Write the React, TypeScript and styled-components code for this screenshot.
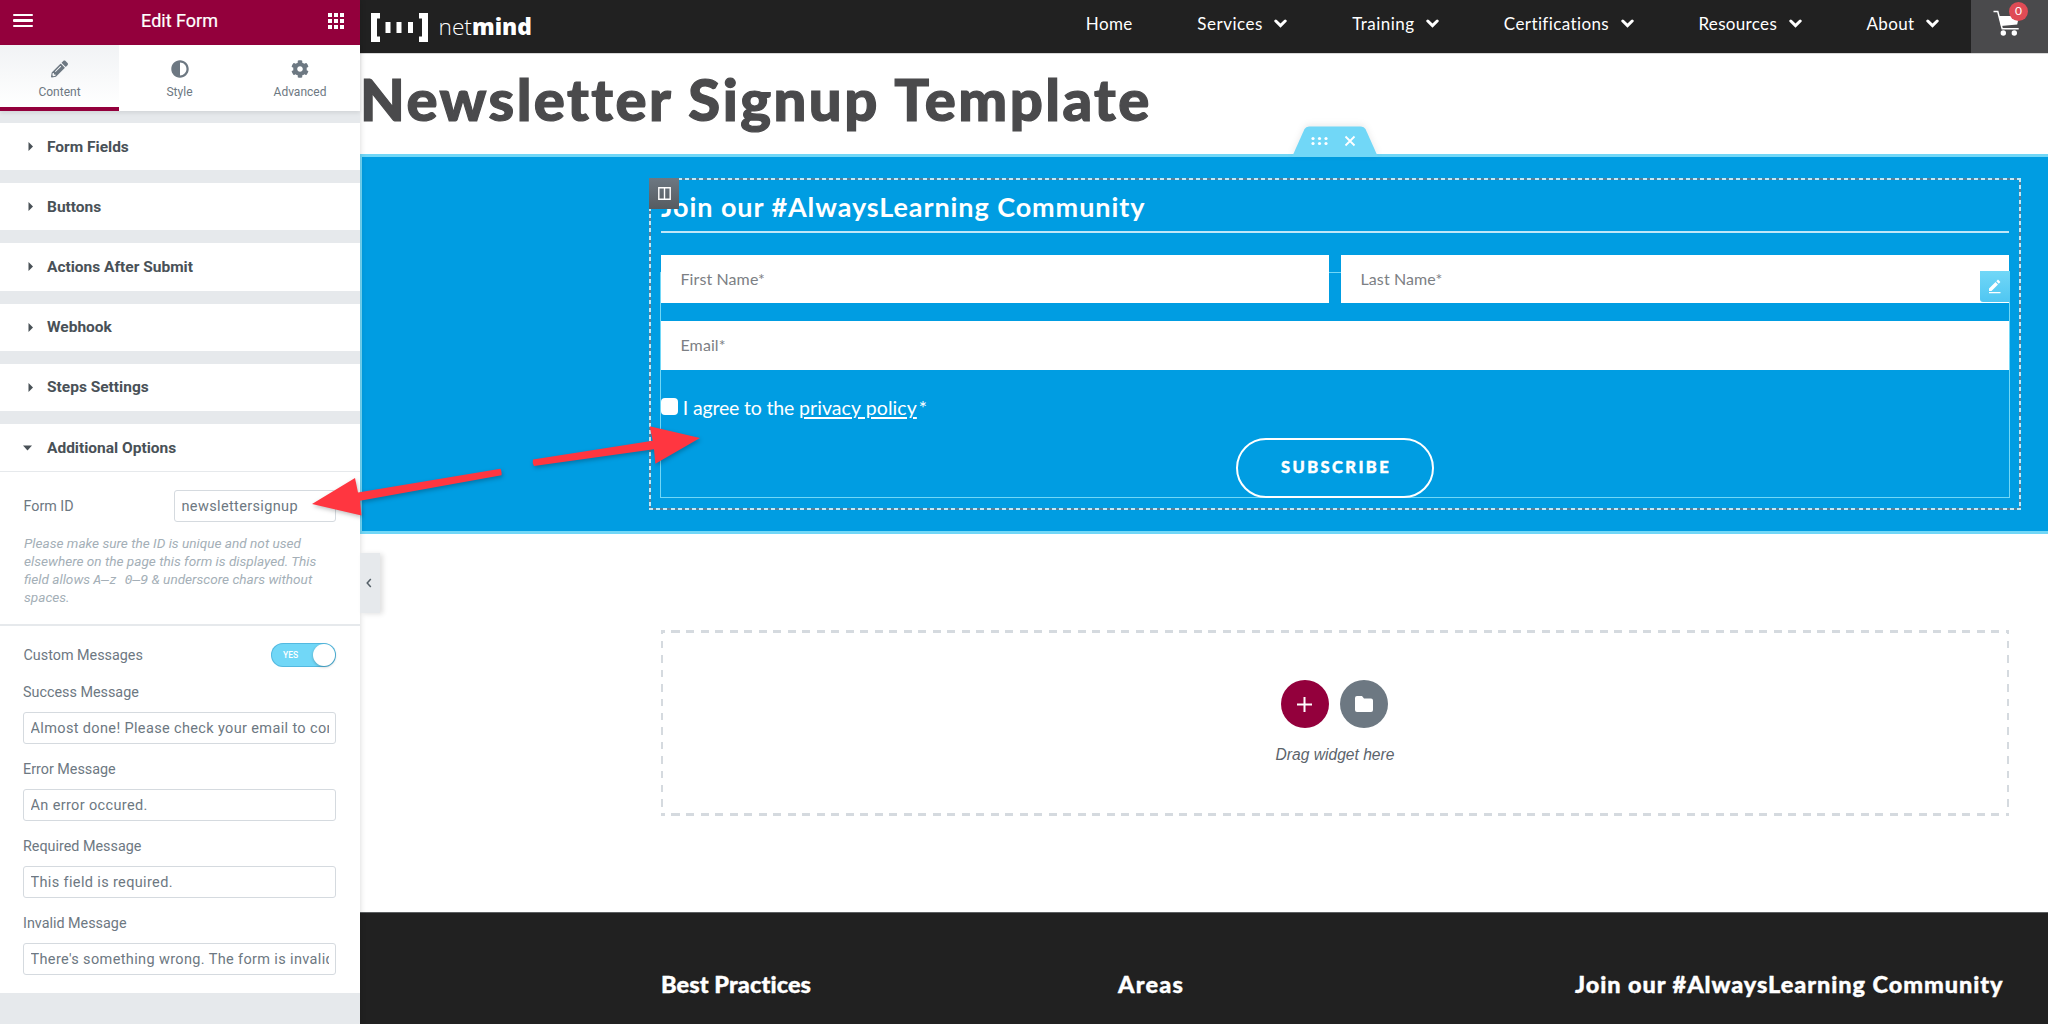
import React from "react";
import styled, { createGlobalStyle, css } from "styled-components";
import { FaPencilAlt, FaAdjust, FaCog } from "react-icons/fa";

const roboto = `Roboto, "Liberation Sans", sans-serif`;
const geo = `Lato, "Open Sans", sans-serif`;

const Global = createGlobalStyle`
  * { box-sizing: border-box; }
  body { margin: 0; background: #fff; overflow: hidden; }
  h1, h2, h3, p { margin: 0; }
`;

const Screen = styled.div`
  position: relative;
  display: flex;
  width: 2048px;
  height: 1024px;
  overflow: hidden;
`;

/* ---------- editor panel ---------- */

const Panel = styled.aside`
  position: relative;
  z-index: 2;
  flex: none;
  width: 360px;
  height: 1024px;
  display: flex;
  flex-direction: column;
  background: #e6e9ec;
  font-family: ${roboto};
  box-shadow: 0 0 6px rgba(0, 0, 0, 0.16);
`;

const PanelHeader = styled.header`
  display: flex;
  align-items: center;
  justify-content: space-between;
  height: 45px;
  padding: 0 16px 4px 13px;
  background: #93003c;
  color: #fff;
`;

const PanelTitle = styled.h2`
  padding-right: 2px;
  font-size: 18px;
  line-height: 40px;
  font-weight: 400;
  -webkit-text-stroke: 0.2px #fff;
`;

const Burger = styled.div`
  display: grid;
  gap: 3px;
  width: 20px;
  i { height: 2.6px; background: #fff; border-radius: 1px; }
`;

const Apps = styled.div`
  display: grid;
  grid-template-columns: repeat(3, 4px);
  gap: 2px;
  i { height: 4px; background: #fff; }
`;

const Tabs = styled.nav`
  display: grid;
  grid-template-columns: 119px 121px 1fr;
  height: 66px;
  background: #fff;
  box-shadow: 0 2px 4px rgba(0, 0, 0, 0.09);
`;

const Tab = styled.div<{ $active?: boolean }>`
  display: flex;
  flex-direction: column;
  align-items: center;
  gap: 6px;
  padding-top: 15px;
  color: #6d7882;
  font-size: 12px;
  line-height: 16px;
  svg { display: block; height: 18px; }
  ${(p) => p.$active && css`
    background: linear-gradient(#f1f3f5, #fff);
    border-bottom: 4px solid #93003c;
  `}
`;

const Sections = styled.div`
  display: flex;
  flex-direction: column;
  gap: 13px;
  padding-top: 12px;
`;

const SectionHead = styled.div<{ $open?: boolean }>`
  display: flex;
  align-items: center;
  height: 47.2px;
  padding-left: ${(p) => (p.$open ? 23 : 28)}px;
  gap: ${(p) => (p.$open ? 15 : 14)}px;
  background: #fff;
  color: #495157;
  font-size: 15.5px;
  font-weight: 700;
`;

const SectionBody = styled.div`
  display: flex;
  flex-direction: column;
  height: 522px;
  border-top: 1px solid #e6e9ec;
  background: #fff;
  color: #6d7882;
`;

const IdRow = styled.div`
  display: flex;
  align-items: center;
  justify-content: space-between;
  padding: 18px 24px 0 23.5px;
  font-size: 14.3px;
`;

const Field = styled.div<{ $width?: number }>`
  width: ${(p) => (p.$width ? p.$width + "px" : "100%")};
  height: 32.3px;
  padding: 0 6.5px;
  border: 1px solid #d5dadf;
  border-radius: 3px;
  background: #fff;
  color: #6d7882;
  font-size: 14.5px;
  letter-spacing: 0.36px;
  line-height: 31px;
  white-space: nowrap;
  overflow: hidden;
  div { overflow: hidden; }
`;

const Hint = styled.p`
  height: 104px;
  padding: 11.2px 0 0 24px;
  border-bottom: 2px solid #e6e9ec;
  color: #a4afb7;
  font-size: 13.6px;
  line-height: 18.1px;
  font-style: italic;
  white-space: nowrap;
  code { font: italic 13px/1 "DejaVu Sans Mono", "Liberation Mono", monospace; white-space: pre; }
`;

const SwitchRow = styled.div`
  display: flex;
  align-items: center;
  justify-content: space-between;
  padding: 17px 24px 0 23.5px;
  font-size: 14.35px;
`;

const Switch = styled.div`
  display: flex;
  align-items: center;
  justify-content: space-between;
  width: 65px;
  height: 24px;
  padding: 0 1px 0 12px;
  border-radius: 12px;
  background: #71d7f7;
  box-shadow: inset 0 0 0 1px rgba(40, 140, 190, 0.4);
  color: #fff;
  font-size: 8.5px;
  font-weight: 500;
  i { width: 22px; height: 22px; border-radius: 50%; background: #fff; box-shadow: 0 1px 3px rgba(0, 0, 0, 0.25); }
`;

const Message = styled.div`
  display: flex;
  flex-direction: column;
  gap: 11.3px;
  height: 77px;
  padding: 0 24px 0 23px;
  font-size: 14.35px;
  line-height: 16px;
`;

const Messages = styled.div`
  padding-top: 17.3px;
`;

const Collapse = styled.div`
  position: absolute;
  left: 360px;
  top: 553px;
  display: flex;
  align-items: center;
  width: 20px;
  height: 60px;
  padding-left: 6px;
  background: #e6e9ec;
  box-shadow: 3px 1px 5px rgba(0, 0, 0, 0.12);
`;

/* ---------- page preview ---------- */

const Page = styled.main`
  display: flex;
  flex-direction: column;
  width: 1688px;
  height: 1024px;
  background: #fff;
  font-family: ${geo};
`;

const TopBar = styled.header`
  display: flex;
  height: 53px;
  padding-left: 11px;
  background: #212121;
  color: #fff;
`;

const Logo = styled.div`
  display: flex;
  flex: 1;
  padding-top: 13px;
  svg { display: block; margin-right: 10.5px; }
`;

const LogoText = styled.div`
  font: 300 22.7px/27px "Open Sans", sans-serif;
  b { font-weight: 800; }
`;

const Menu = styled.nav`
  display: flex;
  padding-right: 32px;
  gap: 64.8px;
`;

const MenuItem = styled.div<{ $ls: number }>`
  display: flex;
  align-items: center;
  gap: 11.5px;
  height: 46px;
  font-size: 17px;
  span { letter-spacing: ${(p) => p.$ls}px; }
`;

const Cart = styled.div`
  position: relative;
  width: 77px;
  background: #4a4a4c;
  svg { display: block; margin: 9px 0 0 22px; }
`;

const Badge = styled.span`
  position: absolute;
  left: 38px;
  top: 1.5px;
  width: 19px;
  height: 19px;
  border-radius: 50%;
  background: #df4b55;
  font-size: 12px;
  line-height: 18px;
  text-align: center;
`;

const PageTitle = styled.h1`
  height: 101px;
  border-top: 1px solid #d8d8d8;
  color: #4a4a4c;
  font-size: 58px;
  letter-spacing: 2.45px;
  line-height: 90px;
  font-weight: 900;
  -webkit-text-stroke: 1.2px #4a4a4c;
  white-space: nowrap;
`;

const Hero = styled.section`
  position: relative;
  height: 380px;
  padding: 21px 0 0 287px;
  border: solid #71d7f7;
  border-width: 3px 0 3px 2px;
  background: #009de2;
  color: #fff;
`;

const HandleTab = styled.div`
  position: absolute;
  left: 930px;
  top: -31px;
  svg { display: block; filter: drop-shadow(0 -2px 3px rgba(0, 0, 0, 0.08)); }
`;

const dashH = "repeating-linear-gradient(90deg, #c3e9f7 0 4px, #5b8099 4px 7.2px)";
const dashV = "repeating-linear-gradient(180deg, #c3e9f7 0 4px, #5b8099 4px 7.2px)";

const Column = styled.div`
  position: relative;
  width: 1372px;
  height: 332px;
  padding: 0 12px;
  background: ${dashH} 0 0 / 100% 2px no-repeat, ${dashH} 0 100% / 100% 2px no-repeat,
    ${dashV} 0 0 / 2px 100% no-repeat, ${dashV} 100% 0 / 2px 100% no-repeat;
`;

const ColumnHandle = styled.div`
  position: absolute;
  left: 0;
  top: 0;
  display: flex;
  align-items: center;
  justify-content: center;
  width: 30px;
  height: 31px;
  background: linear-gradient(#6d7882, #565b60);
`;

const FormTitle = styled.h2`
  height: 55px;
  padding-top: 5px;
  border-bottom: 2px solid #c0e7f8;
  font-size: 27px;
  letter-spacing: 0.92px;
  line-height: 48px;
  font-weight: 700;
`;

const Form = styled.div`
  position: relative;
  margin-top: 22px;
  height: 243px;
`;

const FormOutline = styled.div`
  position: absolute;
  inset: 16.5px -1px 0 -1px;
  border: 1px solid #71d7f7;
`;

const FieldGrid = styled.div`
  position: relative;
  display: grid;
  grid-template-columns: 1fr 1fr;
  gap: 18px 12px;
`;

const PageInput = styled.div<{ $full?: boolean }>`
  grid-column: ${(p) => (p.$full ? "1 / -1" : "auto")};
  height: 48.4px;
  padding-left: 19.5px;
  background: #fff;
  color: #7c8084;
  font-size: 16px;
  letter-spacing: 0.1px;
  line-height: 48px;
`;

const EditHandle = styled.div`
  position: absolute;
  right: -1px;
  top: 16px;
  display: flex;
  align-items: center;
  justify-content: center;
  width: 30px;
  height: 31px;
  border-radius: 0 0 0 3px;
  background: linear-gradient(#71d7f7, #4fc6f2);
`;

const Consent = styled.label`
  position: relative;
  display: flex;
  align-items: center;
  gap: 4.8px;
  margin-top: 22.5px;
  height: 30px;
  font-size: 19.5px;
  letter-spacing: -0.17px;
  i { width: 17px; height: 17px; margin-top: -2px; border-radius: 4px; background: #fff; }
  u { letter-spacing: 0.08px; margin-right: 2px; text-decoration-thickness: 1.5px; text-underline-offset: 2px; }
`;

const Submit = styled.div`
  position: relative;
  width: 198px;
  height: 59.5px;
  margin: 16px auto 0;
  padding-left: 2px;
  border: 2.6px solid #fff;
  border-radius: 30px;
  font-size: 16.5px;
  letter-spacing: 2.4px;
  line-height: 54px;
  font-weight: 900;
  -webkit-text-stroke: 0.4px #fff;
  text-align: center;
`;

const zoneH = "repeating-linear-gradient(90deg, #d5dadf 0 4px, transparent 4px 10.5px, #d5dadf 10.5px 14.5px)";
const zoneV = "repeating-linear-gradient(180deg, #d5dadf 0 4px, transparent 4px 11px, #d5dadf 11px 14.4px)";

const DropZone = styled.div`
  display: flex;
  flex-direction: column;
  align-items: center;
  gap: 16.8px;
  width: 1348px;
  height: 186px;
  margin: 96px 0 96px 301px;
  padding-top: 50px;
  background: ${zoneH} 0 0 / 100% 3px no-repeat, ${zoneH} 0 100% / 100% 3px no-repeat,
    ${zoneV} 0 0 / 2px 100% no-repeat, ${zoneV} 100% 0 / 2px 100% no-repeat;
  color: #5c646b;
  font: italic 15.6px/20px "Liberation Sans", Arial, sans-serif;
`;

const Rounds = styled.div`
  display: flex;
  gap: 11px;
  padding-right: 1.5px;
`;

const Round = styled.div<{ $bg: string }>`
  display: flex;
  align-items: center;
  justify-content: center;
  width: 48px;
  height: 48px;
  border-radius: 50%;
  background: ${(p) => p.$bg};
`;

const Footer = styled.footer`
  display: grid;
  grid-template-columns: 457px 457px auto;
  flex: 1;
  padding: 56px 0 0 301px;
  background: #212121;
  border-top: 1px solid #5c5f61;
  color: #fff;
`;

const FooterTitle = styled.h3<{ $ls: number }>`
  font-size: 23.5px;
  line-height: 30px;
  font-weight: 900;
  letter-spacing: ${(p) => p.$ls}px;
  -webkit-text-stroke: 0.4px #fff;
  white-space: nowrap;
`;

const Arrows = styled.svg`
  position: absolute;
  left: 300px;
  top: 410px;
  z-index: 3;
  filter: drop-shadow(1px 2px 2px rgba(0, 0, 0, 0.25));
`;

const Chevron = () => (
  <svg width="13" height="9" viewBox="0 0 13 9">
    <path d="M1.8 2l4.7 4.6L11.2 2" fill="none" stroke="#fff" strokeWidth="3" strokeLinecap="round" />
  </svg>
);

const closed = ["Form Fields", "Buttons", "Actions After Submit", "Webhook", "Steps Settings"];
const menu = [
  { label: "Home", ls: 0.35 },
  { label: "Services", ls: 0.5, sub: true },
  { label: "Training", ls: 0.47, sub: true },
  { label: "Certifications", ls: 0.4, sub: true },
  { label: "Resources", ls: 0.33, sub: true },
  { label: "About", ls: 0.38, sub: true },
];
const messages = [
  ["Success Message", "Almost done! Please check your email to confirm"],
  ["Error Message", "An error occured."],
  ["Required Message", "This field is required."],
  ["Invalid Message", "There's something wrong. The form is invalid."],
];

export default function App() {
  return (
    <Screen>
      <Global />
      <Panel>
        <PanelHeader>
          <Burger><i /><i /><i /></Burger>
          <PanelTitle>Edit Form</PanelTitle>
          <Apps>{Array.from({ length: 9 }, (_, i) => <i key={i} />)}</Apps>
        </PanelHeader>
        <Tabs>
          <Tab $active><FaPencilAlt size={17} />Content</Tab>
          <Tab><FaAdjust size={18} />Style</Tab>
          <Tab><FaCog size={18} />Advanced</Tab>
        </Tabs>
        <Sections>
          {closed.map((t) => (
            <SectionHead key={t}>
              <svg width="5" height="9" viewBox="0 0 5 9"><path d="M.5 0L5 4.5.5 9z" fill="#495157" /></svg>
              {t}
            </SectionHead>
          ))}
          <div>
            <SectionHead $open>
              <svg width="9" height="6" viewBox="0 0 9 6"><path d="M0 .5h9L4.5 5.5z" fill="#495157" /></svg>
              Additional Options
            </SectionHead>
            <SectionBody>
              <IdRow>Form ID<Field $width={162}><div>newslettersignup</div></Field></IdRow>
              <Hint>
                Please make sure the ID is unique and not used<br />
                elsewhere on the page this form is displayed. This<br />
                field allows <code>A–z 0–9</code> &amp; underscore chars without<br />
                spaces.
              </Hint>
              <SwitchRow>Custom Messages<Switch>YES<i /></Switch></SwitchRow>
              <Messages>
                {messages.map(([l, v]) => (
                  <Message key={l}>{l}<Field><div>{v}</div></Field></Message>
                ))}
              </Messages>
            </SectionBody>
          </div>
        </Sections>
        <Collapse>
          <svg width="6" height="10" viewBox="0 0 6 10"><path d="M4.8 1L1.2 5l3.6 4" fill="none" stroke="#556068" strokeWidth="1.5" /></svg>
        </Collapse>
      </Panel>
      <Page>
        <TopBar>
          <Logo>
            <svg width="57" height="29" viewBox="0 0 57 29" fill="#fff">
              <path d="M0 0h9v5.500H6v18H9V29H0zM57 0h-9v5.500h3v18H48V29h9zM14.500 9h5v11h-5zM25.500 9h5v11h-5zM37 9h5v11h-5z" />
            </svg>
            <LogoText>net<b>mind</b></LogoText>
          </Logo>
          <Menu>
            {menu.map((m) => (
              <MenuItem key={m.label} $ls={m.ls}><span>{m.label}</span>{m.sub && <Chevron />}</MenuItem>
            ))}
          </Menu>
          <Cart>
            <svg width="30" height="28" viewBox="0 0 30 28" fill="#fff">
              <path d="M.5 2.500h4.300L9.200 19.800h16.500" fill="none" stroke="#fff" strokeWidth="1.500" />
              <path d="M6 7h20l-1.800 8.500L8 17z" />
              <circle cx="10.300" cy="24" r="2.700" /><circle cx="21.300" cy="24" r="2.700" />
            </svg>
            <Badge>0</Badge>
          </Cart>
        </TopBar>
        <PageTitle>Newsletter Signup Template</PageTitle>
        <Hero>
          <HandleTab>
            <svg width="87" height="31" viewBox="0 0 87 31">
              <path d="M0 31L12.500 3Q14 .5 17 .5H69Q72 .5 73.500 3L86 31z" fill="#71d7f7" />
              {[21, 27.5, 34].map((x) => [12.5, 17.5].map((y) => <circle key={x + "-" + y} cx={x} cy={y} r="1.6" fill="#fff" />))}
              <path d="M53.500 10.500l9 9m0-9l-9 9" stroke="#fff" strokeWidth="1.800" />
            </svg>
          </HandleTab>
          <Column>
            <FormTitle>Join our #AlwaysLearning Community</FormTitle>
            <Form>
              <FormOutline />
              <FieldGrid>
                <PageInput>First Name*</PageInput>
                <PageInput>Last Name*</PageInput>
                <PageInput $full>Email*</PageInput>
              </FieldGrid>
              <Consent><i /><span>I agree to the <u>privacy policy</u>*</span></Consent>
              <Submit>SUBSCRIBE</Submit>
              <EditHandle>
                <svg width="14" height="15" viewBox="0 0 14 15" fill="#fff"><path d="M1 9.500L7.500 3l2.500 2.500L3.500 12H1zM8.300 2.200L10 .600l2.400 2.400-1.600 1.700zM1 13h11.500v1.200H1z" /></svg>
              </EditHandle>
            </Form>
            <ColumnHandle>
              <svg width="13" height="13" viewBox="0 0 13 13" fill="none" stroke="#fff" strokeWidth="1.4"><path d="M.8.8h11.400v11.400H.8zM6.500.8v11.400" /></svg>
            </ColumnHandle>
          </Column>
        </Hero>
        <DropZone>
          <Rounds>
            <Round $bg="#93003c"><svg width="15" height="15" viewBox="0 0 15 15"><path d="M7.500 0v15M0 7.500h15" stroke="#fff" strokeWidth="2" /></svg></Round>
            <Round $bg="#6d7882"><svg width="18" height="16" viewBox="0 0 18 16"><path d="M2 0h5l2 2.500h7a2 2 0 012 2V14a2 2 0 01-2 2H2a2 2 0 01-2-2V2a2 2 0 012-2z" fill="#fff" /></svg></Round>
          </Rounds>
          Drag widget here
        </DropZone>
        <Footer>
          <FooterTitle $ls={0.1}>Best Practices</FooterTitle>
          <FooterTitle $ls={1.2}>Areas</FooterTitle>
          <FooterTitle $ls={0.93}>Join our #AlwaysLearning Community</FooterTitle>
        </Footer>
      </Page>
      <Arrows width="420" height="130" viewBox="300 410 420 130" fill="#ff3640">
        <path d="M312 504L355 478l3 14.500 142.500-23.800q1.500 3 1 6.600L360 500.700l1.500 14.800z" />
        <path d="M700 438l-44.600 25.700-1.400-14.400L534 466q-2-3-1-6.500l119.700-18.800-3-14.400z" />
      </Arrows>
    </Screen>
  );
}
